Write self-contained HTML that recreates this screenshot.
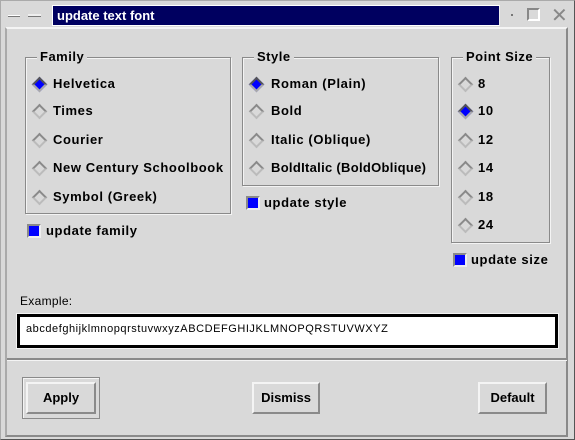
<!DOCTYPE html>
<html><head><meta charset="utf-8"><style>
*{margin:0;padding:0;box-sizing:border-box}
body{width:575px;height:440px;background:#d9d9d9;position:relative;overflow:hidden;font-family:"Liberation Sans",Helvetica,sans-serif;font-weight:bold;font-size:13px;color:#000}
.a{position:absolute}
.grp{position:absolute;border:1px solid #8a8a8a;box-shadow:1px 1px 0 #f4f4f4, inset 1px 1px 0 #f4f4f4}
.lbl{position:absolute;background:#d9d9d9;padding:0 3px;top:-9px;font-size:13px;letter-spacing:0.5px}
.rb{position:absolute;width:11px;height:11px;transform:rotate(45deg);border:2px solid;border-color:#8a8a8a #bbb #bbb #8a8a8a;background:#d9d9d9}
.rb.on{background:#0000ff;border-color:#555 #aaa #aaa #555}
.t{position:absolute;white-space:nowrap;letter-spacing:0.6px}
.cb{position:absolute;width:14px;height:14px;border:2px solid;border-color:#8a8a8a #eee #eee #8a8a8a;background:#0000ff}
.btn{position:absolute;border:2px solid;border-color:#f4f4f4 #8a8a8a #8a8a8a #f4f4f4;background:#d9d9d9;text-align:center;font-size:13px;line-height:27px}
</style></head><body>
<div class="a" style="left:0;top:0;width:575px;height:440px;border:1px solid #aaa;border-right-color:#555;border-bottom-color:#555"></div>
<div class="a" style="left:8px;top:15px;width:12px;height:2px;background:#fff;border-bottom:1px solid #777"></div>
<div class="a" style="left:28px;top:14px;width:13px;height:3px;background:#eee;border-bottom:1px solid #777"></div>
<div class="a" style="left:52px;top:5px;width:448px;height:21px;background:#000060;border:1px solid #fff;border-right-color:#eee"></div>
<div class="t" style="left:57px;top:8px;color:#fff;font-size:13px;letter-spacing:0">update text font</div>
<div class="a" style="left:511px;top:14px;width:2px;height:2px;background:#777"></div>
<div class="a" style="left:527px;top:8px;width:13px;height:13px;border:2px solid #888;border-right-color:#fff;border-bottom-color:#fff"></div>
<div class="t" style="left:551px;top:3px;font-size:20px;font-weight:normal;color:#888">✕</div>
<div class="a" style="left:5px;top:27px;width:563px;height:410px;border:2px solid;border-color:#f4f4f4 #8a8a8a #8a8a8a #f4f4f4;border-left-color:#aaa"></div>

<div class="grp" style="left:25px;top:57px;width:206px;height:157px"><span class="lbl" style="left:11px">Family</span></div>
<div class="rb on" style="left:34px;top:79px"></div><div class="t" style="left:53px;top:76px">Helvetica</div>
<div class="rb" style="left:34px;top:106px"></div><div class="t" style="left:53px;top:103px">Times</div>
<div class="rb" style="left:34px;top:135px"></div><div class="t" style="left:53px;top:132px">Courier</div>
<div class="rb" style="left:34px;top:163px"></div><div class="t" style="left:53px;top:160px">New Century Schoolbook</div>
<div class="rb" style="left:34px;top:192px"></div><div class="t" style="left:53px;top:189px">Symbol (Greek)</div>
<div class="cb" style="left:27px;top:224px"></div><div class="t" style="left:46px;top:223px">update family</div>

<div class="grp" style="left:242px;top:57px;width:197px;height:129px"><span class="lbl" style="left:11px">Style</span></div>
<div class="rb on" style="left:251px;top:79px"></div><div class="t" style="left:271px;top:76px">Roman (Plain)</div>
<div class="rb" style="left:251px;top:106px"></div><div class="t" style="left:271px;top:103px">Bold</div>
<div class="rb" style="left:251px;top:135px"></div><div class="t" style="left:271px;top:132px">Italic (Oblique)</div>
<div class="rb" style="left:251px;top:163px"></div><div class="t" style="left:271px;top:160px;letter-spacing:0.3px">BoldItalic (BoldOblique)</div>
<div class="cb" style="left:246px;top:196px"></div><div class="t" style="left:264px;top:195px">update style</div>

<div class="grp" style="left:451px;top:57px;width:99px;height:186px"><span class="lbl" style="left:11px">Point Size</span></div>
<div class="rb" style="left:460px;top:79px"></div><div class="t" style="left:478px;top:76px">8</div>
<div class="rb on" style="left:460px;top:106px"></div><div class="t" style="left:478px;top:103px">10</div>
<div class="rb" style="left:460px;top:135px"></div><div class="t" style="left:478px;top:132px">12</div>
<div class="rb" style="left:460px;top:163px"></div><div class="t" style="left:478px;top:160px">14</div>
<div class="rb" style="left:460px;top:192px"></div><div class="t" style="left:478px;top:189px">18</div>
<div class="rb" style="left:460px;top:220px"></div><div class="t" style="left:478px;top:217px">24</div>
<div class="cb" style="left:453px;top:253px"></div><div class="t" style="left:471px;top:252px">update size</div>

<div class="t" style="left:20px;top:294px;font-size:12px;font-weight:normal;letter-spacing:0.3px">Example:</div>
<div class="a" style="left:17px;top:314px;width:541px;height:34px;border:3px solid #000;box-shadow:0 0 0 1px #f4f4f4;background:#fff"></div>
<div class="t" style="left:26px;top:323px;font-size:11px;font-weight:normal;letter-spacing:0.55px">abcdefghijklmnopqrstuvwxyzABCDEFGHIJKLMNOPQRSTUVWXYZ</div>

<div class="a" style="left:7px;top:358px;width:560px;height:3px;border-top:2px solid #8a8a8a;border-bottom:1px solid #f4f4f4"></div>

<div class="a" style="left:22px;top:377px;width:78px;height:42px;border:1px solid #8a8a8a;box-shadow:inset 1px 1px 0 #f4f4f4"></div>
<div class="btn" style="left:26px;top:382px;width:70px;height:32px">Apply</div>
<div class="btn" style="left:252px;top:382px;width:68px;height:32px">Dismiss</div>
<div class="btn" style="left:478px;top:382px;width:69px;height:32px">Default</div>
</body></html>
